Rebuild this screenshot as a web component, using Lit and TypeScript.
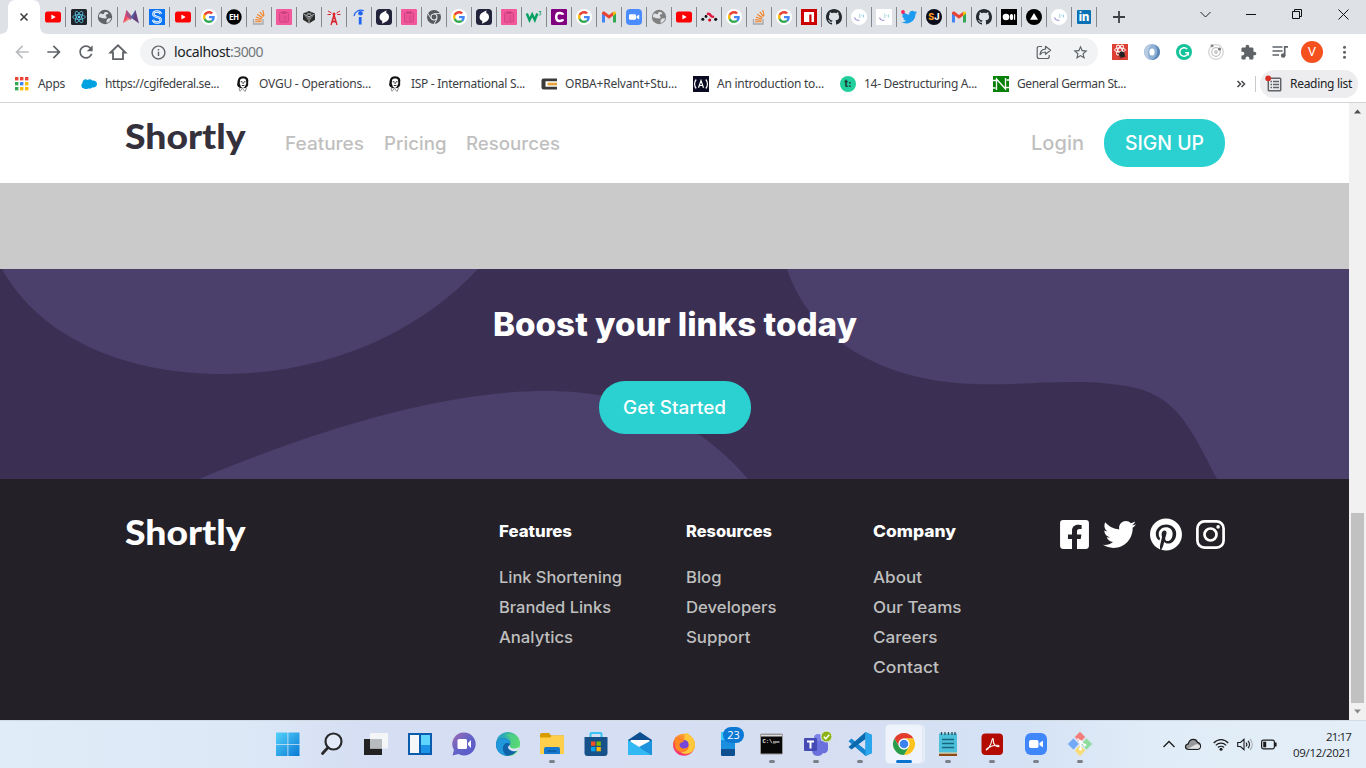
import { LitElement, html, css, svg } from "lit";
import { customElement, property } from "lit/decorators.js";

/* One line of text that fills a set width, by tracking or by widening its glyphs. */
@customElement("fit-text")
class FitText extends LitElement {
  @property({ type: Number }) w = 0;
  @property() text = "";
  @property({ type: Boolean }) wide = false;
  static styles = css`
    :host { display: inline-block; white-space: pre; flex: none; }
    .t { display: inline-block; white-space: pre; transform-origin: 0 50%; }
  `;
  updated() {
    const t = this.shadowRoot!.querySelector(".t") as HTMLElement;
    t.style.letterSpacing = "0px";
    t.style.transform = "none";
    const natural = t.getBoundingClientRect().width;
    if (this.wide) t.style.transform = `scaleX(${this.w / natural})`;
    else t.style.letterSpacing = (this.w - natural) / this.text.length + "px";
    this.style.width = this.w + "px";
  }
  render() {
    return html`<span class="t">${this.text}</span>`;
  }
}
void FitText;

const fit = (text: string, w: number) => html`<fit-text .text=${text} .w=${w}></fit-text>`;
const fill = (text: string, w: number) => html`<fit-text .text=${text} .w=${w} .wide=${true}></fit-text>`;
const icon = (size: number, box: string, body: unknown) =>
  html`<svg width=${size} height=${size} viewBox=${box}>${body}</svg>`;

const TWITTER = "M459.37 151.716c.325 4.548.325 9.097.325 13.645 0 138.72-105.583 298.558-298.558 298.558-59.452 0-114.68-17.219-161.137-47.106 8.447.974 16.568 1.299 25.34 1.299 49.055 0 94.213-16.568 130.274-44.832-46.132-.975-84.792-31.188-98.112-72.772 6.498.974 12.995 1.624 19.818 1.624 9.421 0 18.843-1.3 27.614-3.573-48.081-9.747-84.143-51.98-84.143-102.985v-1.299c13.969 7.797 30.214 12.67 47.431 13.319-28.264-18.843-46.781-51.005-46.781-87.391 0-19.492 5.197-37.36 14.294-52.954 51.655 63.675 129.3 105.258 216.365 109.807-1.624-7.797-2.599-15.918-2.599-24.04 0-57.828 46.782-104.934 104.934-104.934 30.213 0 57.502 12.67 76.67 33.137 23.715-4.548 46.456-13.32 66.599-25.34-7.798 24.366-24.366 44.833-46.132 57.827 21.117-2.273 41.584-8.122 60.426-16.243-14.292 20.791-32.161 39.308-52.628 54.253z";

const word = (t: string, size: number, color: string, y: number, x = 8) =>
  svg`<text x=${x} y=${y} fill=${color} font-family="Inter, sans-serif" font-weight="800" font-size=${size} text-anchor="middle">${t}</text>`;

const CONTINENTS = "M3 4.600c1.500-.4 2.100.8 3.400.5 1-.3.5-1.600 1.700-2.100 1.200-.4 2.700.3 3.300 1.200-.4 1.300-2.200.8-2.600 2-.3 1 1.200 1.400.9 2.600-.4 1.400-2 .5-3.400.5C4.800 9.300 4 8.200 1.900 8.200 1.800 6.500 2.300 5.400 3 4.600zM10.500 10c1-.9 2.400-.8 3.700-.8-.4 2.200-2 4.200-4.400 4.800-.5-1.400-.6-2.900.7-4z";
const FAV: Record<string, unknown> = {
  yt: svg`<rect x="0" y="2.500" width="16" height="11" rx="2.600" fill="#f00"/><path d="M6.400 5.500v5l4.300-2.500z" fill="#fff"/>`,
  react: svg`<rect width="16" height="16" rx="1.500" fill="#20232a"/><g fill="none" stroke="#61dafb" stroke-width=".7"><ellipse cx="8" cy="8" rx="6.300" ry="2.400"/><ellipse cx="8" cy="8" rx="6.300" ry="2.400" transform="rotate(60 8 8)"/><ellipse cx="8" cy="8" rx="6.300" ry="2.400" transform="rotate(120 8 8)"/></g><circle cx="8" cy="8" r="1.300" fill="#61dafb"/>`,
  globe: svg`<circle cx="8" cy="8" r="7.200" fill="#606468"/><path d=${CONTINENTS} fill="#dee1e6"/>`,
  globe2: svg`<circle cx="8" cy="8" r="7.200" fill="#808080"/><path d=${CONTINENTS} fill="#dee1e6"/>`,
  m: svg`<path d="M3.500 1 8 8 4.500 11 0 14z" fill="#e8476a"/><path d="M3.500 1 9.500 8 7.500 11 3 6z" fill="#a5548a"/><path d="M12.500 1 7.500 8.500 10 10l3.500 2z" fill="#4c5fa3"/><path d="M12.500 1l3.500 13.500-6-4.500z" fill="#66407c"/><path d="M0 14 4.500 8.500 7 10z" fill="#f7766b"/>`,
  s: svg`<rect width="16" height="16" fill="#0b74f5"/><path d="M11.800 5.200C11.500 3.200 9.800 2.500 8 2.500 5.800 2.500 4.300 3.600 4.300 5.300 4.300 8.800 11.800 7 11.800 10.700c0 1.800-1.600 2.800-3.800 2.800-2 0-3.700-.8-4-2.700" fill="none" stroke="#fff" stroke-width="2.300"/><path d="M11.800 5.200C11.500 3.200 9.800 2.500 8 2.500 5.800 2.500 4.300 3.600 4.300 5.300 4.300 8.800 11.800 7 11.800 10.700c0 1.800-1.600 2.800-3.800 2.800-2 0-3.700-.8-4-2.700" fill="none" stroke="#0b74f5" stroke-width=".6"/>`,
  g: svg`<circle cx="8" cy="8" r="8" fill="#fff"/><g transform="translate(2 2) scale(.25)"><path fill="#EA4335" d="M24 9.500c3.540 0 6.710 1.220 9.210 3.600l6.850-6.850C35.900 2.380 30.470 0 24 0 14.620 0 6.510 5.380 2.560 13.220l7.980 6.190C12.430 13.720 17.740 9.500 24 9.500z"/><path fill="#4285F4" d="M46.980 24.550c0-1.570-.15-3.090-.38-4.550H24v9.020h12.940c-.58 2.960-2.260 5.480-4.780 7.180l7.730 6c4.510-4.180 7.090-10.360 7.090-17.650z"/><path fill="#FBBC05" d="M10.530 28.590c-.48-1.450-.76-2.990-.76-4.590s.27-3.140.76-4.590l-7.980-6.190C.92 16.460 0 20.120 0 24c0 3.880.92 7.540 2.560 10.780l7.970-6.190z"/><path fill="#34A853" d="M24 48c6.480 0 11.930-2.130 15.890-5.810l-7.730-6c-2.150 1.450-4.920 2.300-8.160 2.300-6.260 0-11.570-4.220-13.470-9.910l-7.980 6.190C6.510 42.620 14.620 48 24 48z"/></g>`,
  eh: svg`<circle cx="8" cy="8" r="7.700" fill="#000"/>${word("EH", 7, "#fff", 10.5)}`,
  so: svg`<path d="M2.500 10v5h9.500v-5" fill="none" stroke="#a7a9ac" stroke-width="1.300"/><path d="M4 12.800h6.500M4.200 10.600l6.300.7M4.800 8l6 1.900M6.200 5.200l5.200 3.500M8.800 2.800l3.700 4.800M11.800 1l1.200 5.800" stroke="#f48024" stroke-width="1.100"/>`,
  pink: svg`<rect width="16" height="16" rx="1" fill="#f2589b"/><g fill="none" stroke="#c23b76" stroke-width=".8"><rect x="3.700" y="3.700" width="8.600" height="9.300" rx=".8"/><path d="M6 3.700V2.800h4v1.700H6zM5.300 7h1M7.500 7h3.300M5.300 9h1M7.500 9h3.300M5.300 11h1M7.500 11h3.300"/></g>`,
  cube: svg`<path d="M8 2l6 2.500v6.300L8 14.500l-6-3.700V4.500z" fill="#2c2c2c"/><path d="M2.500 5.200 8 7.800l5.500-2.600M8 7.800V14" stroke="#dee1e6" stroke-width=".8" fill="none"/><path d="M5.500 3.800 10.500 6M10.500 3.800 5.500 6M4.300 7.500l2 1v2M11.700 7.500l-2 1v2" stroke="#999da2" stroke-width=".9" fill="none"/>`,
  tower: svg`<path d="M8 5.500 5 16M8 5.500 11 16M6.800 9.500h2.400M6.300 11.500l3.700 2M9.800 11.500l-3.800 2" stroke="#d9232e" stroke-width="1.300" fill="none"/><circle cx="8" cy="5" r="1.500" fill="#d9232e"/><path d="M5.500 4 2 2M4.800 5.500H1.500M10.500 4 14 2M11.200 5.500h3.300" stroke="#d9232e" stroke-width="1"/>`,
  i: svg`<circle cx="9.500" cy="4.300" r="2.300" fill="#2164f3"/><path d="M9.200 8v7.500" stroke="#2164f3" stroke-width="2.800"/><path d="M3 7C4 2.500 8 0 13 1.800" stroke="#2164f3" stroke-width="1.200" fill="none"/>`,
  swoosh: svg`<rect width="16" height="16" rx="3.500" fill="#22223b"/><g transform="rotate(-28 8 8)" fill="#fff"><path d="M3.500 8.500C3.500 5.200 6 3.300 9 3.300h4.500C12.300 4.300 12 5 12 6c.8.500 1 1.200 1 2 0 3.200-2.500 5-5.500 5H3c1-.9 1.500-1.700 1.500-2.600-.7-.5-1-1.200-1-1.900z"/></g>`,
  chromeg: svg`<circle cx="8" cy="8" r="7" fill="#55585c"/><path d="M8 4.600h6.300M5 9.700 1.900 4.300M11 9.700 8 15.200" stroke="#dee1e6" stroke-width="1"/><circle cx="8" cy="8" r="3.500" fill="#dee1e6"/><circle cx="8" cy="8" r="2.400" fill="#55585c"/>`,
  w3: svg`<path d="M.8 4.500 3.500 11 6.200 5.500 8.800 11 11.300 4.500" stroke="#04a163" stroke-width="2.400" fill="none"/><path d="M12.800 2.500H15l-1.200 1.600c2 .2 1.300 2.500-1 1.800" stroke="#04a163" stroke-width=".8" fill="none"/>`,
  c: svg`<rect width="16" height="16" rx="1" fill="#800080"/><path d="M12 5.800Q11.600 4 8.500 4 5.200 4 5.200 8t3.300 4Q11.600 12 12 10.200" fill="none" stroke="#fff" stroke-width="2.500"/>`,
  gmail: svg`<path d="M1 13.500V4l3 2.200v7.300z" fill="#4285f4"/><path d="M12 13.500V6.200L15 4v9.500z" fill="#34a853"/><path d="M1 4.500C1 2.500 3 2 4 3l4 3 4-3v3.800L8 9.800 4 6.800 1 5z" fill="#ea4335"/><path d="M12 3c1.500-1.200 3 0 3 1.500L12 7z" fill="#fbbc04"/>`,
  zoom: svg`<rect width="16" height="16" rx="4" fill="#4a8cff"/><rect x="3" y="5.200" width="7" height="5.600" rx="1.200" fill="#fff"/><path d="M10.600 7.300 13.200 5.500v5l-2.600-1.800z" fill="#fff"/>`,
  router: svg`<g fill="#151515"><circle cx="1.800" cy="10.300" r="1.500"/><circle cx="5" cy="7.500" r="1.400"/><circle cx="14.700" cy="10.300" r="1.600"/></g><circle cx="8.700" cy="11" r="1.500" fill="#d0021b"/><path d="M7 4.800C10.500 4.500 8.500 7.800 12 7.800" stroke="#e0183c" stroke-width="2.600" stroke-linecap="round" fill="none"/>`,
  npm: svg`<rect width="16" height="16" fill="#c00"/><path d="M3 3h10v10h-2.500V5.500H8.300V13H3z" fill="#fff"/>`,
  gh: svg`<path fill="#24292e" d="M8 0C3.580 0 0 3.580 0 8c0 3.540 2.290 6.530 5.470 7.590.4.070.55-.17.55-.38 0-.19-.01-.82-.01-1.490-2.010.37-2.530-.49-2.690-.94-.09-.23-.48-.94-.82-1.130-.28-.15-.68-.52-.01-.53.63-.01 1.080.58 1.230.82.72 1.210 1.870.87 2.330.66.070-.52.28-.87.51-1.070-1.780-.2-3.640-.89-3.640-3.950 0-.87.31-1.590.82-2.150-.08-.2-.36-1.020.08-2.120 0 0 .67-.21 2.200.82.64-.18 1.320-.27 2-.27.68 0 1.360.09 2 .27 1.530-1.040 2.200-.82 2.200-.82.44 1.100.16 1.920.08 2.120.51.56.82 1.270.82 2.150 0 3.070-1.870 3.750-3.650 3.950.29.25.54.73.54 1.480 0 1.070-.01 1.930-.01 2.200 0 .21.15.46.55.38A8.013 8.013 0 0016 8c0-4.420-3.580-8-8-8z"/>`,
  jc: svg`<circle cx="8" cy="8" r="8" fill="#fff"/><path d="M3.500 8.500c.8 2.500 3 3.500 5 2.500" stroke="#a7a0d8" stroke-width="1.200" fill="none"/><path d="M8.800 4.500v4.500M10.300 6l1.500 1.500M12.500 5.500v3" stroke="#a9d8e4" stroke-width="1"/>`,
  js: svg`<rect width="16" height="16" fill="#fff"/><path d="M3.500 8.500c.8 2.500 3 3.500 5 2.500" stroke="#a7a0d8" stroke-width="1.200" fill="none"/><path d="M8.800 4.500v4.500M10.300 6l1.500 1.500M12.500 5.500v3" stroke="#a9d8e4" stroke-width="1"/>`,
  tw: svg`<g transform="translate(.5 .3) scale(.0305)"><path d=${TWITTER} fill="#1d9bf0"/></g><circle cx="2" cy="3" r="1.900" fill="#f4245e"/>`,
  sj: svg`<circle cx="8" cy="8" r="8" fill="#0b0d1c"/>${word("S", 9, "#ff9a1f", 11.3, 5.3)}${word("J", 9, "#fff", 11.3, 11)}`,
  med: svg`<rect width="16" height="16" fill="#000"/><circle cx="5" cy="8" r="3.300" fill="#fff"/><ellipse cx="10.500" cy="8" rx="1.700" ry="3.100" fill="#fff"/><rect x="13" y="5.200" width="1.200" height="5.600" fill="#fff"/>`,
  tri: svg`<circle cx="8" cy="8" r="8" fill="#000"/><path d="M8 4l4 6.800H4z" fill="#fff"/>`,
  li: svg`<rect x="1" y="1" width="14" height="14" rx="1" fill="#0a72b4"/>${word("in", 11.5, "#fff", 12.3)}`,
  face: svg`<path d="M3.500 2.500C5-.3 11-.5 12.800 2.500c1.200 2-.1 3.500.4 5 .3 2-1 3.500-2.700 4.500l-4.800.2C3.500 11.500 1.800 10 2.200 8c.5-2 .2-3.500 1.300-5.500z" fill="#111"/><path d="M5 4C6.500 2.300 9.500 2 11 3.800l.3 3.700L9.700 11l-1.700.9-2-.9L4.800 7.500z" fill="#fff"/><path d="M5.700 5.800h1.600M8.900 5.800h1.600M6.800 9.500h2.600M8.100 6v2" stroke="#111" stroke-width=".9"/><path d="M4 12l1 3.300 2.500-2.800 2.500 3 1.500-3.500" stroke="#777" stroke-width=".8" fill="none"/>`,
  cloud: svg`<path d="M3.200 12.500C.5 12.500-.6 8.700 1.500 7c-.3-3 3-4.800 5.200-3 1.500-1.400 3.500-1 4.500.6 2.200-.7 4.800.8 4.800 3.400 0 2.500-2.500 4-4.800 3.300-1 1.600-3 1.700-4 .9-1 1-3 1.200-4 .3z" fill="#00a1e0"/>`,
  orba: svg`<path d="M16 2.500H2.500Q.5 2.500.5 4.500v7q0 2 2 2H16v-2.700H4.500V5.200H16z" fill="#3a3a3a"/><rect x="6.500" y="6.700" width="9.500" height="2.700" fill="#e8a23a"/>`,
  fcc: svg`<rect width="16" height="16" fill="#0a0a23"/><path d="M3.200 3.500c-2.200 2.500-2.200 6.500 0 9M12.800 3.500c2.200 2.500 2.200 6.500 0 9M5.500 11.800 8 4.500l2.500 7.300M6.500 9.500h3" stroke="#fff" stroke-width="1.200" fill="none"/>`,
  t: svg`<circle cx="8" cy="8" r="8" fill="#21cf9c"/>${word("t:", 9.5, "#1d3b35", 11.3)}`,
  n: svg`<rect width="16" height="16" fill="#068006"/><path d="M3.500 14V3L12.500 13V2M0 4.500h4.500M11.500 11.500H16M0 12h2.500M13.500 4H16" stroke="#fff" stroke-width="1.300" fill="none"/>`,
};

const TABS = "yt react globe m s yt g eh so pink cube tower i swoosh pink chromeg g swoosh pink w3 c g gmail zoom globe2 yt router g so g npm gh jc js tw sj gmail gh med tri jc li".split(" ");

const MARKS: [string, string, number][] = [
  ["cloud", "https://cgifederal.se...", 114],
  ["face", "OVGU - Operations...", 112],
  ["face", "ISP - International S...", 114],
  ["orba", "ORBA+Relvant+Stu...", 112],
  ["fcc", "An introduction to...", 107],
  ["t", "14- Destructuring A...", 113],
  ["n", "General German St...", 109],
];

@customElement("browser-chrome")
class BrowserChrome extends LitElement {
  static styles = css`
    :host { display: block; font: 12px/16px "Noto Sans", "Open Sans", sans-serif; color: #3c4043; }
    svg { display: block; overflow: visible; }
    .strip { display: flex; height: 34px; background: #dee1e6; }
    .active { width: 40px; height: 34px; flex: none; }
    .tab { box-sizing: border-box; width: 25px; height: 20px; margin-top: 7px; border-right: 1px solid #85888d; display: flex; align-items: center; justify-content: center; flex: none; }
    .tab.wide { width: 26px; }
    .plus { width: 44px; display: grid; place-items: center; }
    .win { margin-left: auto; display: flex; height: 28px; }
    .win div { width: 46px; display: grid; place-items: center; }
    .bar { display: flex; height: 36px; padding: 0 6px; background: #fff; align-items: center; }
    .cell { width: 32px; height: 32px; display: grid; place-items: center; flex: none; }
    .omni { flex: 1; height: 28px; border-radius: 14px; background: #f1f3f4; margin: 0 6px; display: flex; align-items: center; }
    .omni .cell { margin-right: 0; }
    .omni .share { margin-right: 0; padding-right: 4px; }
    .info { width: 34px; padding-left: 2px; box-sizing: border-box; display: grid; place-items: center; }
    .url { flex: 1; display: flex; font-size: 14px; color: #202124; }
    .port { color: #74787c; display: flex; }
    .star { padding-right: 2px; }
    .avatar { width: 22px; height: 22px; border-radius: 50%; background: #f4511e; color: #fff; display: grid; place-items: center; font: 13px/22px Roboto, sans-serif; }
    .marks { display: flex; height: 33px; padding: 0 8px 4px 14px; box-sizing: border-box; background: #fff; border-bottom: 1px solid #d3d5d8; align-items: center; }
    .mark { display: flex; gap: 8px; margin-right: 16px; align-items: center; flex: none; }
    .more { margin-left: auto; padding-right: 10px; }
    .reading { display: flex; align-items: center; box-sizing: border-box; height: 28px; width: 98px; border-radius: 14px; background: #ededef; margin-left: 4px; padding-left: 6px; gap: 7px; color: #202124; flex: none; }
    .rule { width: 1px; height: 16px; background: #c8cacd; }
  `;
  render() {
    const k = "#5f6368";
    return html`
      <div class="strip">
        <div class="active"><svg width="48" height="34"><path d="M0 34c5 0 8-3 8-8V8c0-5 3-8 8-8h16c5 0 8 3 8 8v18c0 5 3 8 8 8z" fill="#fff"/><path d="M20.500 13.500l7 7m0-7l-7 7" stroke="#3c4043" stroke-width="1.600"/></svg></div>
        ${TABS.map((t, n) => html`<div class="tab ${n < 7 ? "wide" : ""}">${icon(16, "0 0 16 16", FAV[t])}</div>`)}
        <div class="plus">${icon(12, "0 0 12 12", svg`<path d="M6 0v12M0 6h12" stroke="#3c4043" stroke-width="1.800"/>`)}</div>
        <div class="win">
          <div>${icon(11, "0 0 11 11", svg`<path d="M.5 3l5 5 5-5" fill="none" stroke="#222"/>`)}</div>
          <div>${icon(10, "0 0 10 10", svg`<path d="M0 5.500h10" stroke="#111"/>`)}</div>
          <div>${icon(10, "0 0 10 10", svg`<path d="M.5 2.500h7v7h-7zM2.500 2.500v-2h7v7h-2" fill="none" stroke="#111"/>`)}</div>
          <div>${icon(11, "0 0 11 11", svg`<path d="M.5.5l10 10m0-10l-10 10" stroke="#111"/>`)}</div>
        </div>
      </div>
      <div class="bar">
        <div class="cell">${icon(20, "0 0 24 24", svg`<path fill="#babcbe" d="M20 11H7.830l5.590-5.590L12 4l-8 8 8 8 1.410-1.410L7.830 13H20v-2z"/>`)}</div>
        <div class="cell">${icon(20, "0 0 24 24", svg`<path fill=${k} d="M12 4l-1.410 1.410L16.170 11H4v2h12.170l-5.580 5.590L12 20l8-8z"/>`)}</div>
        <div class="cell">${icon(20, "0 0 24 24", svg`<path fill=${k} d="M17.650 6.350C16.200 4.900 14.210 4 12 4c-4.420 0-7.990 3.580-7.990 8s3.570 8 7.990 8c3.730 0 6.840-2.550 7.730-6h-2.080c-.82 2.330-3.040 4-5.650 4-3.310 0-6-2.690-6-6s2.690-6 6-6c1.660 0 3.140.69 4.220 1.780L13 11h7V4l-2.350 2.350z"/>`)}</div>
        <div class="cell">${icon(18, "0 0 18 18", svg`<path d="M1.500 9.500 9 2.300l7.500 7.200H14v6.700H4V9.500z" fill="none" stroke=${k} stroke-width="1.800"/>`)}</div>
        <div class="omni">
          <div class="info">${icon(17, "0 0 24 24", svg`<path fill=${k} d="M11 7h2v2h-2zm0 4h2v6h-2zm1-9C6.480 2 2 6.480 2 12s4.480 10 10 10 10-4.480 10-10S17.520 2 12 2zm0 18c-4.410 0-8-3.590-8-8s3.590-8 8-8 8 3.590 8 8-3.590 8-8 8z"/>`)}</div>
          <div class="url">${fit("localhost", 56)}<span class="port">${fit(":3000", 33)}</span></div>
          <div class="cell share">${icon(16, "0 0 16 16", svg`<path d="M6 2.500H3.200Q1.200 2.500 1.200 4.500v8q0 2 2 2h8q2 0 2-2v-1.500" fill="none" stroke=${k} stroke-width="1.200"/><path d="M4 10.500C4.500 7 6.500 5.300 9.500 5.200V2.300L14.600 6.300 9.500 10.300V8C7 8 5.500 8.700 4 10.500z" fill="none" stroke=${k} stroke-width="1.200" stroke-linejoin="round"/>`)}</div>
          <div class="cell star">${icon(17, "0 0 24 24", svg`<path fill=${k} d="M22 9.240l-7.190-.62L12 2 9.190 8.630 2 9.240l5.460 4.730L5.820 21 12 17.270 18.180 21l-1.630-7.030L22 9.240zM12 15.400l-3.760 2.270 1-4.280-3.320-2.880 4.380-.38L12 6.100l1.710 4.040 4.380.38-3.320 2.880 1 4.280L12 15.400z"/>`)}</div>
        </div>
        <div class="cell">${icon(16, "0 0 16 16", svg`<rect width="16" height="16" fill="#dd4035"/><g fill="none" stroke="#fff" stroke-width="1"><ellipse cx="8" cy="6" rx="5.500" ry="2"/><ellipse cx="8" cy="6" rx="5.500" ry="2" transform="rotate(60 8 6)"/><ellipse cx="8" cy="6" rx="5.500" ry="2" transform="rotate(120 8 6)"/></g><ellipse cx="10" cy="10.500" rx="2.500" ry="3.200" fill="#222" transform="rotate(-35 10 10.500)"/><path d="M5.500 9.500l8 3M8 14.500l4-7M6.500 12.500l6-3.500" stroke="#222" stroke-width=".8"/>`)}</div>
        <div class="cell">${icon(16, "0 0 16 16", svg`<circle cx="8" cy="8" r="8" fill="#8fb0d5"/><path d="M8 0a8 8 0 0 0-2 15.700C3 12 3 5 8 0z" fill="#b9cbe2"/><path d="M10.500 1C15 5 14 13 7.500 15.900A8 8 0 0 0 16 8 8 8 0 0 0 10.500 1z" fill="#5c86b8"/><ellipse cx="8" cy="8" rx="2.600" ry="3.600" fill="#fff"/>`)}</div>
        <div class="cell">${icon(16, "0 0 16 16", svg`<circle cx="8" cy="8" r="8" fill="#15c39a"/><path d="M11.200 5A4.300 4.300 0 1 0 12.300 8.700H9.200M12.300 8.700 12.300 11.500" fill="none" stroke="#fff" stroke-width="1.500"/>`)}</div>
        <div class="cell">${icon(16, "0 0 16 16", svg`<circle cx="8" cy="8" r="7.300" fill="none" stroke="#d1d1d1" stroke-width="1.200"/><circle cx="8" cy="8" r="4.300" fill="none" stroke="#c4c4c4" stroke-width="1.200"/><circle cx="8" cy="8" r="1.900" fill="#c8c8c8"/><circle cx="4" cy="1.800" r="1.500" fill="#888"/><circle cx="11.500" cy="5" r="1.500" fill="#777"/>`)}</div>
        <div class="cell">${icon(17, "0 0 24 24", svg`<path fill=${k} d="M20.500 11H19V7c0-1.100-.9-2-2-2h-4V3.500C13 2.120 11.880 1 10.500 1S8 2.120 8 3.500V5H4c-1.100 0-1.990.9-1.990 2v3.800H3.500c1.490 0 2.700 1.210 2.700 2.700s-1.210 2.700-2.700 2.700H2V20c0 1.100.9 2 2 2h3.800v-1.500c0-1.490 1.210-2.700 2.700-2.700 1.490 0 2.700 1.210 2.700 2.700V22H17c1.100 0 2-.9 2-2v-4h1.500c1.380 0 2.500-1.120 2.500-2.500S21.880 11 20.500 11z"/>`)}</div>
        <div class="cell">${icon(16, "0 0 16 16", svg`<path d="M.5 3h10M.5 7h10M.5 11h6.500" stroke=${k} stroke-width="1.600"/><path d="M12.700 11.500V2.800h3.300" fill="none" stroke=${k} stroke-width="1.700"/><circle cx="11.200" cy="11.500" r="2.300" fill=${k}/>`)}</div>
        <div class="cell"><div class="avatar">V</div></div>
        <div class="cell">${icon(16, "0 0 16 16", svg`<g fill=${k}><circle cx="8.500" cy="3.300" r="1.500"/><circle cx="8.500" cy="8.300" r="1.500"/><circle cx="8.500" cy="13.300" r="1.500"/></g>`)}</div>
      </div>
      <div class="marks">
        <div class="mark">${icon(16, "0 0 16 16", [0, 1, 2].map((r) => [0, 1, 2].map((c) => svg`<rect x=${1 + c * 5} y=${1 + r * 5} width="3.400" height="3.400" fill=${["#ea4335", "#ea4335", "#ea4335", "#34a853", "#4285f4", "#fbbc04", "#34a853", "#fbbc04", "#fbbc04"][r * 3 + c]}/>`)))}${fit("Apps", 27)}</div>
        ${MARKS.map(([i, t, w]) => html`<div class="mark">${icon(16, "0 0 16 16", FAV[i])}${fit(t, w)}</div>`)}
        <div class="more">${icon(8, "0 0 8 8", svg`<path d="M.5 1l3 3-3 3M4.500 1l3 3-3 3" fill="none" stroke="#45484c" stroke-width="1.500"/>`)}</div>
        <div class="rule"></div>
        <div class="reading">${icon(17, "0 0 17 17", svg`<rect x="2.300" y="2.300" width="12.400" height="12.400" rx=".8" fill="none" stroke=${k} stroke-width="1.500"/><path d="M4.500 5.500H6M7 5.500h6M4.500 8.500H6M7 8.500h6M4.500 11.500H6M7 11.500h6" stroke=${k} stroke-width="1.400"/><circle cx="2.200" cy="2.300" r="2.900" fill="#d93025"/>`)}${fit("Reading list", 62)}</div>
      </div>
    `;
  }
}
void BrowserChrome;

const COLS: { head: [string, number]; links: [string, number][] }[] = [
  { head: ["Features", 73], links: [["Link Shortening", 123], ["Branded Links", 112], ["Analytics", 74]] },
  { head: ["Resources", 86], links: [["Blog", 35.5], ["Developers", 90.5], ["Support", 64.5]] },
  { head: ["Company", 83], links: [["About", 49], ["Our Teams", 88.5], ["Careers", 64.5], ["Contact", 66]] },
];

@customElement("landing-page")
class LandingPage extends LitElement {
  static styles = css`
    :host { display: flex; height: 617px; font-family: Inter, sans-serif; font-weight: 500; }
    svg { display: block; }
    .page { flex: 1; display: flex; flex-direction: column; min-width: 0; }
    nav { display: flex; height: 80px; box-sizing: border-box; padding: 0 124px 0 125px; background: #fff; color: #bfbfbf; font-size: 18px; line-height: 24px; }
    .logo { font: 900 34px/40px Lato, sans-serif; color: #34313d; margin-top: 13px; }
    .links { display: flex; gap: 20px; margin: 29px 0 0 39px; }
    .right { margin-left: auto; display: flex; gap: 20px; align-items: center; font-size: 20px; }
    .btn { background: #2bd0d0; color: #fff; display: grid; place-items: center; }
    .signup { width: 121px; height: 48px; border-radius: 23px; }
    .gray { height: 86px; background: #cacaca; }
    .hero { height: 210px; background: #3b3054; display: grid; }
    .hero > * { grid-area: 1 / 1; }
    .boost { display: flex; flex-direction: column; align-items: center; color: #fff; padding-top: 36px; }
    .title { font-size: 32px; line-height: 40px; font-weight: 800; }
    .start { width: 152px; height: 53px; border-radius: 26px; margin-top: 36px; font-size: 18px; }
    footer { flex: 1; background: #232127; display: flex; padding: 0 124px 0 125px; color: #bfbfbf; font-size: 16px; line-height: 30px; }
    footer .logo { color: #fff; width: 374px; margin-top: 33px; }
    .col { width: 187px; padding-top: 37px; display: flex; flex-direction: column; }
    .head { color: #fff; font-weight: 800; margin-bottom: 16px; height: 30px; }
    .link { height: 30px; }
    .social { display: flex; gap: 14px; margin: 39px 0 0 auto; height: 33px; }
    .scroll { width: 17px; background: #f1f1f1; display: flex; flex-direction: column; align-items: center; justify-content: space-between; }
    .arrow { height: 17px; display: grid; place-items: center; }
    .track { flex: 1; padding-top: 393px; }
    .thumb { width: 13px; height: 190px; background: #c1c1c1; }
  `;
  render() {
    return html`
      <div class="page">
        <nav>
          <div class="logo">${fill("Shortly", 120.5)}</div>
          <div class="links">${fill("Features", 79)}${fill("Pricing", 62.5)}${fill("Resources", 94)}</div>
          <div class="right">${fill("Login", 53)}<div class="btn signup">${fill("SIGN UP", 79)}</div></div>
        </nav>
        <div class="gray"></div>
        <div class="hero">
          <svg width="1349" height="210"><g fill="#4b3f6b"><path d="M2 0C42 72 130 105 222 105 330 105 420 62 478 0z"/><path d="M787 0C812 75 890 113 975 115 1030 117 1090 106 1143 121 1182 134 1197 172 1217 210H1349V0z"/><path d="M199 210C330 155 450 122 545 122 640 122 700 155 748 210z"/></g></svg>
          <div class="boost">
            <div class="title">${fill("Boost your links today", 364)}</div>
            <div class="btn start">${fill("Get Started", 103)}</div>
          </div>
        </div>
        <footer>
          <div class="logo">${fill("Shortly", 120.5)}</div>
          ${COLS.map((c) => html`<div class="col"><div class="head">${fill(...c.head)}</div>${c.links.map((l) => html`<div class="link">${fill(...l)}</div>`)}</div>`)}
          <div class="social">
            <svg width="29" height="33" viewBox="0 0 448 512"><path fill="#fff" d="M400 32H48A48 48 0 0 0 0 80v352a48 48 0 0 0 48 48h137.250V327.690h-63V256h63v-54.640c0-62.150 37-96.480 93.670-96.480 27.140 0 55.520 4.840 55.520 4.840v61h-31.270c-30.810 0-40.420 19.120-40.420 38.730V256h68.780l-11 71.690h-57.780V480H400a48 48 0 0 0 48-48V80a48 48 0 0 0-48-48z"/></svg>
            <svg width="33" height="33" viewBox="0 0 512 512"><path fill="#fff" d=${TWITTER}/></svg>
            <svg width="32" height="33" viewBox="0 0 496 512"><path fill="#fff" d="M496 256c0 137-111 248-248 248-25.600 0-50.200-3.900-73.400-11.100 10.100-16.500 25.200-43.500 30.800-65 3-11.600 15.400-59 15.400-59 8.100 15.400 31.700 28.500 56.800 28.500 74.800 0 128.700-68.800 128.700-154.300 0-81.900-66.900-143.200-152.900-143.200-107 0-163.900 71.800-163.900 150.100 0 36.400 19.400 81.700 50.300 96.100 4.700 2.200 7.200 1.200 8.300-3.300.8-3.400 5-20.300 6.900-28.100.6-2.500.3-4.700-1.700-7.100-10.100-12.500-18.300-35.300-18.300-56.600 0-54.700 41.400-107.600 112-107.600 60.900 0 103.600 41.500 103.600 100.900 0 67.100-33.900 113.600-78 113.600-24.300 0-42.600-20.100-36.700-44.800 7-29.500 20.500-61.300 20.500-82.600 0-19-10.200-34.900-31.400-34.900-24.900 0-44.900 25.700-44.900 60.200 0 22 7.400 36.800 7.400 36.800s-24.500 103.800-29 123.200c-5 21.400-3 51.600-.9 71.200C65.400 450.900 0 361.100 0 256 0 119 111 8 248 8s248 111 248 248z"/></svg>
            <svg width="29" height="33" viewBox="0 0 29 33"><rect x="1.400" y="3.400" width="26.200" height="26.200" rx="7" fill="none" stroke="#fff" stroke-width="2.700"/><circle cx="14.500" cy="16.500" r="6" fill="none" stroke="#fff" stroke-width="2.700"/><circle cx="22.100" cy="8.900" r="1.800" fill="#fff"/></svg>
          </div>
        </footer>
      </div>
      <div class="scroll">
        <div class="arrow">${icon(7, "0 0 7 4", svg`<path d="M0 4 3.500 0 7 4z" fill="#505050"/>`)}</div>
        <div class="track"><div class="thumb"></div></div>
        <div class="arrow">${icon(7, "0 0 7 4", svg`<path d="M0 0 3.500 4 7 0z" fill="#8a8a8a"/>`)}</div>
      </div>
    `;
  }
}
void LandingPage;

const APPS: { art: unknown; run?: boolean; on?: boolean }[] = [
  { art: svg`<g fill="url(#win)"><path d="M0 .5h11.500V12H0zM12.300.5H23.500V12H12.300zM0 12.800h11.500V24H0zM12.300 12.800H23.500V24H12.300z"/></g>` },
  { art: svg`<circle cx="13.500" cy="9.500" r="8" fill="#e4eaf7" stroke="#2a2a2c" stroke-width="2.200"/><path d="M8 15.500 2.500 21.500" stroke="#2a2a2c" stroke-width="2.800" stroke-linecap="round"/>` },
  { art: svg`<rect x="0" y="7" width="18" height="16" fill="#222"/><rect x="6" y="1" width="18" height="15.500" fill="#f3f5f7"/><rect x="6" y="7" width="12" height="9.500" fill="#b9bcbf"/>` },
  { art: svg`<rect width="24" height="22" y="1" fill="#0b5cad"/><rect x="2" y="3" width="9" height="18" fill="#f5f7f9"/><rect x="13" y="3" width="9" height="10" fill="#5fd4fd"/><rect x="13" y="13" width="9" height="8" fill="#1b93e6"/>` },
  { art: svg`<path d="M12 .5A11.500 11.500 0 1 1 6.500 22L.5 23.500 2 18A11.500 11.500 0 0 1 12 .5z" fill="url(#chat)"/><rect x="5.500" y="7" width="9.500" height="10" rx="1.500" fill="#fff"/><path d="M16 11l3-3v8l-3-3z" fill="#fff"/>` },
  { art: svg`<circle cx="12" cy="12" r="12" fill="url(#edge)"/><path d="M.2 11C2 6.500 7 5 11 7c4 2 4.500 5.500 2.500 7.500-.8 2 4.500 4 8.800 1.500C20 22 14 24.500 9.500 23.500 3 22-.5 17 .2 11z" fill="#0f62a8"/><path d="M.2 11C2 6.500 7 5 11 7c2.500 1.300 3.500 3 3 5-3-2.500-8 0-7 6 .5 2.500 2 4.500 4 5.800C4 23.500-.5 18 .2 11z" fill="#2198dc"/><path d="M14 12c2-4 .5-8-5-8.500 6-3.500 13-1 14.700 6.500C24.500 15 17 17.500 14 15c-.8-.9-.5-1.800 0-3z" fill="#55d47c" opacity=".65"/><path d="M14 12.200c-1.300 2.800 1.500 4.800 5.500 4.300l4-1.500-1 3.500c-5 2-10 0-10.500-3.500z" fill="#dbe4f5"/>` },
  { run: true, art: svg`<path d="M0 3q0-2 2-2h7l2 2.500h13V22H0z" fill="#d99b00"/><path d="M0 5.500h10l2-2h12V22H0z" fill="#fdcf4a"/><path d="M4 22v-5q0-2 2-2h12q2 0 2 2v5z" fill="#1478cf"/><path d="M7.500 19h9" stroke="#0b5aa5" stroke-width="1.500"/>` },
  { art: svg`<path d="M6.500 6V2q0-1 1-1h9q1 0 1 1v4" fill="none" stroke="#37c3f5" stroke-width="2"/><path d="M.5 5h23v16q0 3-3 3h-17q-3 0-3-3z" fill="#17518a"/><path d="M7 9.500h4.300v4.300H7z" fill="#f25022"/><path d="M12.500 9.500h4.300v4.300h-4.300z" fill="#7fba00"/><path d="M7 15h4.300v4.300H7z" fill="#00a4ef"/><path d="M12.500 15h4.300v4.300h-4.300z" fill="#ffb900"/>` },
  { art: svg`<path d="M0 8 12 0l12 8v15H0z" fill="#0f4f8f"/><path d="M2.500 8h19v3L12 16l-9.500-5z" fill="#fff"/><path d="M0 8l24 15H0z" fill="#32b8f2"/><path d="M24 8v15L11 15z" fill="#1c93dc"/>` },
  { art: svg`<circle cx="12" cy="12.800" r="11" fill="url(#fox)"/><path d="M13 2c3-2 3.500-1 4 1.500 4 2 6.500 6 6 11-2 8-11 9-15 5 9 2 12-8 4-11z" fill="#ffc73a"/><circle cx="12" cy="12.500" r="4.600" fill="#7447d9"/><path d="M3 4.500 6.500 8C9 6.500 11 7 12 9c-1 2-4 1-4.500 3.500C7 16 12 18 16 15c-1 6-10 6.500-12.500 1z" fill="#ff8a22"/>` },
  { art: svg`<path d="M5 0h14v12H5z" fill="#3ac8f6"/><path d="M5 8h14v10H5z" fill="#1a8fdf"/><path d="M5 17h14v5.500q0 1.500-1.500 1.500h-11Q5 24 5 22.500z" fill="#0e4f8f"/>` },
  { run: true, art: svg`<rect x=".5" y="2" width="22" height="20" rx="1" fill="#080808" stroke="#9a9a9a"/><path d="M1 3.500h21" stroke="#ddd" stroke-width="2"/><text x="2.500" y="10.500" fill="#eee" font-size="5.500" font-family="Liberation Mono, monospace" font-weight="700">C:\\_</text><path d="M13 10h6.500" stroke="#ccc" stroke-width="1.300"/>` },
  { run: true, art: svg`<circle cx="14" cy="6" r="4" fill="#7b83eb"/><path d="M8 9h13q3 0 3 3v5c0 3-3 5-5 4-1 2-3 3-5.500 3C10 24 8 21 8 18z" fill="#6a70dc"/><rect y="6" width="13" height="13" rx="1" fill="#454ab4"/><path d="M3 9.500h7M6.500 9.500v7" stroke="#fff" stroke-width="2"/><circle cx="22.500" cy="4.500" r="5.500" fill="#8ab416" stroke="#e7eef6" stroke-width="1"/><path d="M19.800 4.700l2 2 3.500-4" fill="none" stroke="#fff" stroke-width="1.600"/>` },
  { run: true, art: svg`<path d="M17.500 0 24 3v18l-6.500 3L.5 9.200 3.500 6.500 17.500 18z" fill="#1585cf"/><path d="M17.500 0v7L3.500 17.500.5 15z" fill="#0869ae"/><path d="M17.500 0 24 3v18l-6.500 3z" fill="#2ba5ec"/>` },
  { run: true, on: true, art: svg`<path d="M2.470 6.500A11 11 0 0 1 21.530 6.500H12A5.500 5.500 0 0 0 7.240 14.750z" fill="#e33b2e"/><path d="M21.530 6.500A11 11 0 0 1 12 23L16.760 14.750A5.500 5.500 0 0 0 12 6.500z" fill="#fcc31e"/><path d="M12 23A11 11 0 0 1 2.470 6.500L7.240 14.750A5.500 5.500 0 0 0 16.760 14.750z" fill="#2a9d4a"/><circle cx="12" cy="12" r="5.400" fill="#fff"/><circle cx="12" cy="12" r="4.300" fill="#3d83f0"/>` },
  { run: true, art: svg`<rect x="3" y="1.500" width="18" height="20" fill="#4cc0da"/><path d="M3 21.500h18V24H3z" fill="#8c4a14"/><path d="M3 21h18" stroke="#f3d9a5"/><path d="M6 7.500h12M6 11.500h12M6 15.500h12" stroke="#16667f" stroke-width="1.500"/><path d="M5.500 0v3M9 0v3M12.500 0v3M16 0v3M19 0v3" stroke="#2b4f5c" stroke-width="1.300"/>` },
  { run: true, art: svg`<rect x="1.500" y="1.500" width="21.500" height="21.500" rx="4" fill="#b30b00"/><path d="M6.500 18c2-.5 4.700-6 5.500-10 .3-2 1.500-2 1.300 0-.4 3.500 2.200 6.800 4.900 6.800 1.500-.2 1-1.400-1-1.500-4-.2-7.500 1.400-9.700 3-1.200.8-1.500 1.700-1 1.700z" fill="none" stroke="#fff" stroke-width="1.100"/>` },
  { run: true, art: svg`<rect x="1" y="1" width="22" height="22" rx="6" fill="#3f87fb"/><rect x="5" y="8" width="9.500" height="8" rx="1.800" fill="#fff"/><path d="M15.500 11 19 8.500v7L15.500 13z" fill="#fff"/>` },
  { run: true, art: svg`<g stroke="#e6eaf5" stroke-width=".5"><path d="M12-.5l5.500 5.500L12 11 6.500 5z" fill="#f07b7b"/><path d="M5.500 6 11 12l-5.500 6L-.5 12z" fill="#74a9f5"/><path d="M18.500 6l6 6-6 6L13 12z" fill="#8fdc9e"/><path d="M12 13l5.500 5.500L12 24.500 6.500 18.500z" fill="#f7dc75"/></g><path d="M9.500 6.500 12.500 9.500v7.500M12.500 9.500 16.500 13" stroke="#fff" stroke-width="1.300" fill="none"/><g fill="#fff"><circle cx="12.500" cy="9.500" r="1.500"/><circle cx="12.500" cy="17" r="1.500"/><circle cx="16.800" cy="13" r="1.500"/></g>` },
];

@customElement("task-bar")
class TaskBar extends LitElement {
  static styles = css`
    :host { display: flex; height: 48px; box-sizing: border-box; padding: 0 15px 0 266px; background: linear-gradient(90deg, #e0edf8 0, #dce8f6 18%, #d5def3 27%, #d6def2 60%, #d5e2f5 75%, #e0ecf7 84%, #e3eef8 100%); border-top: 1px solid #d2dae6; font-family: "Open Sans", "Noto Sans", sans-serif; color: #1c1c1e; }
    svg { display: block; overflow: visible; }
    .app { width: 44px; height: 47px; display: flex; flex-direction: column; align-items: center; flex: none; position: relative; }
    .plate { width: 36px; height: 38px; margin-top: 4px; border-radius: 4px; display: flex; justify-content: center; padding-top: 7px; box-sizing: border-box; }
    .on .plate { background: #eff3fb; box-shadow: 0 0 0 1px #e2e8f3, 3px 0 0 #e6ecf7; }
    .dot { width: 6px; height: 3px; border-radius: 2px; background: #7c808a; margin-top: -3px; z-index: 1; }
    .on .dot { width: 16px; background: #0b72d0; }
    .badge { position: absolute; left: 17px; top: 6px; width: 21px; height: 16px; border-radius: 8px; background: #0b78d4; color: #fff; font-size: 11px; line-height: 16px; text-align: center; }
    .tray { display: flex; margin-left: auto; align-items: center; }
    .tray > div { display: grid; place-items: center; width: 24px; }
    .tray .chev { width: 16px; }
    .tray .cl { width: 32px; }
    .tray .clock { width: 58px; margin-left: 12px; justify-items: end; font-size: 11.500px; line-height: 16px; }
  `;
  render() {
    return html`
      <svg width="0" height="0"><defs>
        <linearGradient id="win" gradientUnits="userSpaceOnUse" x1="0" y1="0" x2="24" y2="24"><stop offset="0" stop-color="#55d3fb"/><stop offset="1" stop-color="#0878d4"/></linearGradient>
        <linearGradient id="chat" x1="0" y1="0" x2="1" y2="1"><stop offset="0" stop-color="#a06ab4"/><stop offset=".5" stop-color="#6264c7"/><stop offset="1" stop-color="#5558cb"/></linearGradient>
        <linearGradient id="edge" x1="0" y1="0" x2="1" y2=".4"><stop offset="0" stop-color="#1c93d8"/><stop offset="1" stop-color="#5be069"/></linearGradient>
        <linearGradient id="fox" x1=".7" y1="0" x2=".2" y2="1"><stop offset="0" stop-color="#ffb52e"/><stop offset=".5" stop-color="#ff6a2b"/><stop offset="1" stop-color="#f1248b"/></linearGradient>
      </defs></svg>
      ${APPS.map((a, n) => html`<div class="app ${a.on ? "on" : ""}"><div class="plate">${icon(24, "0 0 24 24", a.art)}</div>${a.run ? html`<div class="dot"></div>` : ""}${n === 10 ? html`<div class="badge">23</div>` : ""}</div>`)}
      <div class="tray">
        <div class="chev">${icon(12, "0 0 12 12", svg`<path d="M.5 8 6 2.500 11.500 8" fill="none" stroke="#1c1c1e" stroke-width="1.300"/>`)}</div>
        <div class="cl">${icon(16, "0 0 16 16", svg`<path d="M4 12.500C1.500 12.500.5 11.200.5 9.800S2 7 3.300 6.800C4 4 6.300 2.300 8.300 2.300c2 0 3.500 1 4.200 3 2 .5 3 2 3 3.700S14.300 12.500 12 12.500z" fill="#96989b" stroke="#1c1c1e" stroke-width="1.200"/><path d="M3 11.800 9.500 8l2.500-1 3 1.500v2l-2 1.300z" fill="#dfe1e3"/>`)}</div>
        <div>${icon(16, "0 0 16 16", svg`<g fill="none" stroke="#1c1c1e" stroke-width="1.200"><path d="M.7 6C5 1.500 11 1.500 15.300 6M2.800 8.300c3-3 7.400-3 10.400 0M5 10.500c1.700-1.700 4.300-1.700 6 0"/></g><circle cx="8" cy="12.300" r="1.500" fill="#1c1c1e"/>`)}</div>
        <div>${icon(16, "0 0 16 16", svg`<g fill="none" stroke="#1c1c1e" stroke-width="1.100"><path d="M.7 5.500H3.500L7 2.300v10.400L3.500 9.500H.7zM9 5.500c.9 1 .9 3 0 4M11 3.800c2 2 2 5.400 0 7.400"/><path d="M13 2c3 3 3 8 0 11" stroke="#a8aeb5"/></g>`)}</div>
        <div>${icon(16, "0 0 16 16", svg`<rect x=".6" y="3.100" width="12.800" height="8.800" rx="1.800" fill="none" stroke="#1c1c1e" stroke-width="1.200"/><rect x="2.200" y="4.700" width="3" height="5.600" fill="#1c1c1e"/><path d="M14.700 5.500v4" stroke="#1c1c1e" stroke-width="1.800"/>`)}</div>
        <div class="clock">${fit("21:17", 25)}${fit("09/12/2021", 58)}</div>
      </div>
    `;
  }
}
void TaskBar;

@customElement("app-root")
class AppRoot extends LitElement {
  static styles = css`
    :host { display: flex; flex-direction: column; width: 1366px; height: 768px; overflow: hidden; background: #fff; }
  `;
  render() {
    return html`<browser-chrome></browser-chrome><landing-page></landing-page><task-bar></task-bar>`;
  }
}
void AppRoot;
